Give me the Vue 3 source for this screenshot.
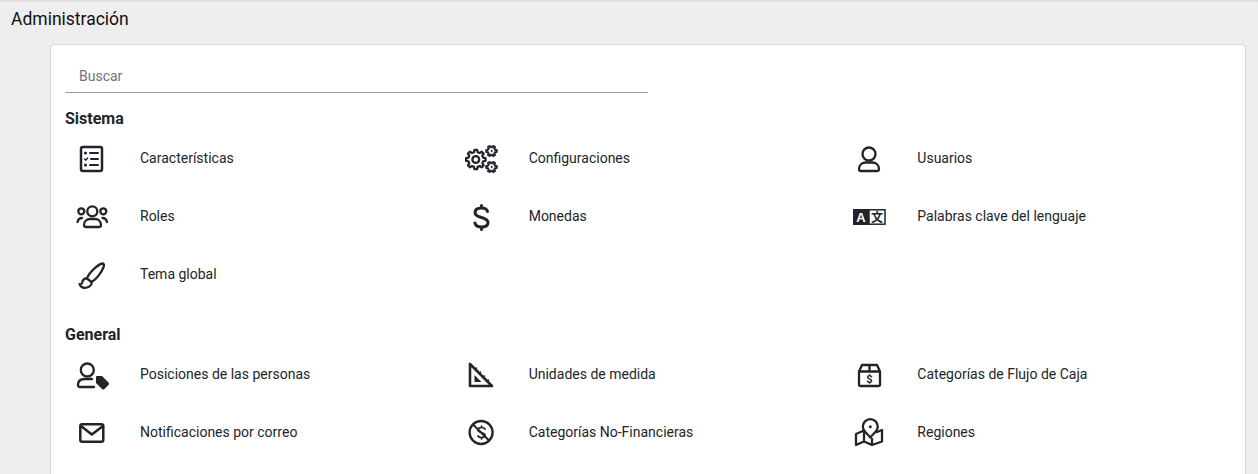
<template>
  <div class="page">
    <h1 class="title">Administración</h1>
    <section class="card">
      <input class="search" type="text" placeholder="Buscar" />
      <div v-for="group in groups" :key="group.name" class="group">
        <h2 class="group-name">{{ group.name }}</h2>
        <div class="items">
          <a v-for="item in group.items" :key="item.label" class="item" href="#">
            <span class="icon">
              <svg width="36" height="36" viewBox="0 0 36 36" fill="none" stroke="#212529" stroke-width="2.3" stroke-linecap="round" stroke-linejoin="round">
                <template v-if="item.icon === 'features'">
                  <rect x="8" y="7" width="21" height="24" rx="2" stroke-width="2.5" />
                  <path d="M17 13h8M17 25h8M18 19h7" stroke-width="2" />
                  <circle cx="12.500" cy="13" r=".8" stroke-width="1.500" />
                  <circle cx="12.500" cy="25" r=".8" stroke-width="1.500" />
                  <path d="M11.500 19l1.200 1.200 2-2.200" stroke-width="1.300" />
                </template>
                <template v-else-if="item.icon === 'settings'">
                  <path :d="gear(13.8, 19.5, 9.8, 7.6, 8)" />
                  <circle cx="13.8" cy="19.5" r="3.4" />
                  <path :d="gear(29.5, 11, 5.2, 3.8, 6)" stroke-width="2.2" />
                  <circle cx="29.5" cy="11" r=".6" stroke-width="1" />
                  <path :d="gear(29.5, 27, 5.2, 3.8, 6)" stroke-width="2.2" />
                  <circle cx="29.5" cy="27" r=".6" stroke-width="1" />
                </template>
                <template v-else-if="item.icon === 'user'">
                  <circle cx="19" cy="14" r="6.500" />
                  <path d="M9 29c0-4 3-6.500 7-6.500h6c4 0 7 2.500 7 6.500a2 2 0 0 1-2 2H11a2 2 0 0 1-2-2z" />
                </template>
                <template v-else-if="item.icon === 'roles'">
                  <circle cx="19.300" cy="13.300" r="5" />
                  <circle cx="8.300" cy="13.300" r="3" />
                  <circle cx="30.300" cy="13.300" r="3" />
                  <path d="M11 27c0-4 3-6 6-6h5c3 0 6 2 6 6a2 2 0 0 1-2 2H13a2 2 0 0 1-2-2z" />
                  <path d="M4.500 24c.5-2 2-4 4.500-4M34 24c-.5-2-2-4-4.500-4" />
                </template>
                <template v-else-if="item.icon === 'dollar'">
                  <path stroke-width="3" d="M25.500 13.500C25 11 23 10 19.500 10 15 10 13 12 13 14.500c0 3 3 4 6.500 5 3.500 1 6.500 2 6.500 5 0 2.500-2 4.500-6.500 4.500-4 0-6-1.500-6.500-4M19.500 7.500V10M19.500 29v2.500" />
                </template>
                <template v-else-if="item.icon === 'language'">
                  <rect x="3" y="11" width="16" height="16" fill="#212529" stroke="none" />
                  <rect x="19" y="11.800" width="16" height="14.400" stroke-width="1.500" stroke-linejoin="miter" />
                  <text class="glyph-a" x="11" y="23.500" text-anchor="middle">A</text>
                  <text class="glyph-zh" x="27" y="23.500" text-anchor="middle">文</text>
                </template>
                <template v-else-if="item.icon === 'brush'">
                  <path d="M30 7.500C26 7.500 16 16 14 22.500l4.500 3.500C24 23 31 13 31 8.500z" />
                  <path d="M14 22.500c-3.500-.5-4.500 2.500-5 4.500-.5 1.500-2 1.500-2.500 1 1 3.500 4.500 4.500 7.500 3.500 3.500-1 5-3.500 4.500-5.500" />
                </template>
                <template v-else-if="item.icon === 'position'">
                  <circle cx="14.300" cy="14" r="6.500" />
                  <path d="M21 31H7a2 2 0 0 1-2-2c0-4 3-6 7-6h7" />
                  <path fill="#212529" stroke="none" d="M24 20h5l6.500 6.500a2 2 0 0 1 0 2.500l-4 4a2 2 0 0 1-2.500 0L23 27v-6a1 1 0 0 1 1-1z" />
                </template>
                <template v-else-if="item.icon === 'ruler'">
                  <path d="M8 8v22h22z" stroke-width="2.600" />
                  <path d="M12.500 19V26H19.500z" fill="#212529" stroke="none" />
                  <path d="M13 13.500l1.500-1.500M17 17.500l1.500-1.500M21 21.500l1.500-1.500M25 25.500l1.500-1.500" stroke-width="1.500" />
                </template>
                <template v-else-if="item.icon === 'box'">
                  <path d="M9 15.500h21V29a1 1 0 0 1-1 1H10a1 1 0 0 1-1-1zM9 15.500l3-6.500h15l3 6.500M19.500 9v6.500" />
                  <text class="glyph-s" x="19.500" y="27" text-anchor="middle">$</text>
                </template>
                <template v-else-if="item.icon === 'mail'">
                  <rect x="7.300" y="10.300" width="23" height="17.400" rx="2" stroke-width="2.500" />
                  <path d="M8 12l10.800 8.500L30 12" stroke-width="2.500" />
                </template>
                <template v-else-if="item.icon === 'nofinance'">
                  <circle cx="19.100" cy="18.500" r="11.500" />
                  <path d="M11 10.500l16 16" stroke-width="2" />
                  <path stroke-width="1.700" d="M23 15c-.5-1-2-1.500-3.500-1.500-2 0-3.500 1-3.500 2.500 0 3 7 2 7 5 0 1.500-1.500 2.500-3.500 2.500-1.500 0-3-.5-3.500-1.500M19.500 12v1.500M19.500 23.500V25" />
                </template>
                <template v-else-if="item.icon === 'map'">
                  <path d="M14 16.500L6 20v11l8-3.500 8 3.500 10-3.500V16l-5 2M14 18v9.500M22 25v6" />
                  <path d="M20.300 23.500c-3-3.800-7.500-6.800-7.500-10.800a7.500 7.500 0 0 1 15 0c0 4-4.500 7-7.500 10.800z" fill="#fff" />
                  <circle cx="20.300" cy="12.700" r="1.500" fill="#212529" stroke="none" />
                </template>
              </svg>
            </span>
            <span class="label">{{ item.label }}</span>
          </a>
        </div>
      </div>
    </section>
  </div>
</template>

<script setup>
const groups = [
  {
    name: 'Sistema',
    items: [
      { label: 'Características', icon: 'features' },
      { label: 'Configuraciones', icon: 'settings' },
      { label: 'Usuarios', icon: 'user' },
      { label: 'Roles', icon: 'roles' },
      { label: 'Monedas', icon: 'dollar' },
      { label: 'Palabras clave del lenguaje', icon: 'language' },
      { label: 'Tema global', icon: 'brush' }
    ]
  },
  {
    name: 'General',
    items: [
      { label: 'Posiciones de las personas', icon: 'position' },
      { label: 'Unidades de medida', icon: 'ruler' },
      { label: 'Categorías de Flujo de Caja', icon: 'box' },
      { label: 'Notificaciones por correo', icon: 'mail' },
      { label: 'Categorías No-Financieras', icon: 'nofinance' },
      { label: 'Regiones', icon: 'map' }
    ]
  }
]

// outline of a toothed wheel, used for the settings icon
const gear = (cx, cy, outer, inner, teeth) => {
  const step = (Math.PI * 2) / teeth
  const points = []
  for (let i = 0; i < teeth; i++) {
    const a = i * step
    const corners = [
      [inner, a - step * 0.32],
      [outer, a - step * 0.17],
      [outer, a + step * 0.17],
      [inner, a + step * 0.32]
    ]
    corners.forEach(([r, t]) => {
      points.push(`${(cx + r * Math.cos(t)).toFixed(2)} ${(cy + r * Math.sin(t)).toFixed(2)}`)
    })
  }
  return `M${points.join('L')}Z`
}
</script>

<style>
html,
body {
  height: 100%;
  overflow: hidden;
  background: #eeeeee;
}
</style>

<style scoped>
.page {
  height: 474px;
  overflow: hidden;
  padding: 10px 12px 0 50px;
  box-sizing: border-box;
  background: #eeeeee;
  box-shadow: inset 0 3px 3px -2px rgba(0, 0, 0, 0.1);
  font-family: Roboto, "Liberation Sans", sans-serif;
  color: #212529;
}
.title {
  margin: 0 0 15px -39px;
  font-size: 17.5px;
  line-height: 19px;
  font-weight: 400;
  color: #111;
}
.card {
  min-height: 500px;
  background: #fff;
  border: 1px solid #d6d6d6;
  border-radius: 4px;
  padding: 15px 14px 0;
}
.search {
  display: block;
  box-sizing: border-box;
  width: 583px;
  height: 33px;
  padding: 0 14px;
  border: 0;
  border-bottom: 1px solid #9a9a9a;
  outline: none;
  font: 400 14px Roboto, sans-serif;
  color: #495057;
}
.search::placeholder {
  color: #6c757d;
  opacity: 1;
}
.group-name {
  margin: 0;
  font-size: 16px;
  line-height: 18px;
  font-weight: 700;
  color: #212529;
}
.group:first-of-type .group-name {
  margin-top: 17px;
}
.group + .group {
  margin-top: 23px;
}
.items {
  display: grid;
  grid-template-columns: repeat(3, 1fr);
  margin-top: 1px;
}
.item {
  display: flex;
  align-items: center;
  height: 58px;
  gap: 23px;
  color: inherit;
  text-decoration: none;
}
.icon {
  display: flex;
  justify-content: center;
  width: 52px;
  flex: none;
}
.label {
  font-size: 14px;
}
.glyph-a {
  font: 700 13px "Liberation Sans", sans-serif;
  fill: #fff;
  stroke: none;
}
.glyph-zh {
  font: 700 12px "Noto Sans CJK SC", sans-serif;
  fill: #212529;
  stroke: none;
}
.glyph-s {
  font: 700 11px Roboto, sans-serif;
  fill: #212529;
  stroke: none;
}
</style>
